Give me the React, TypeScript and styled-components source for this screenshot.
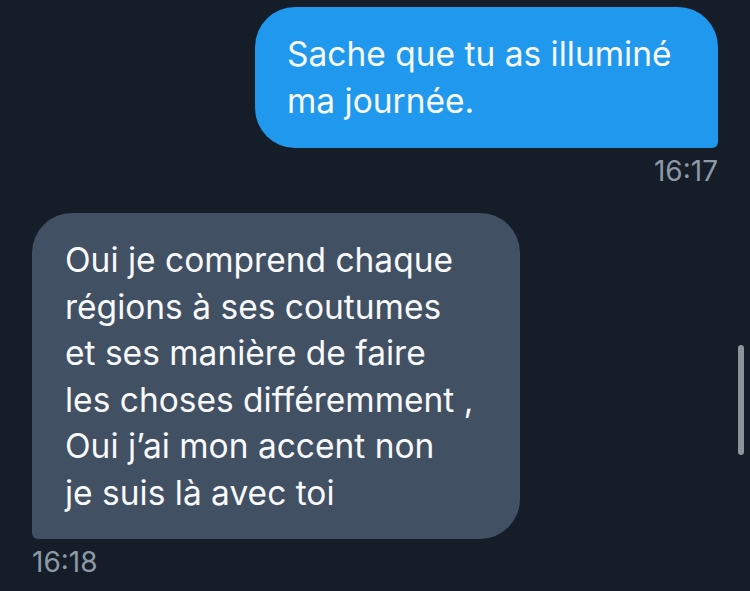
import React from 'react';
import styled, { createGlobalStyle } from 'styled-components';

type Message = {
  text: string;
  time: string;
  mine?: boolean;
  width: number;
};

const messages: Message[] = [
  {
    text: 'Sache que tu as illuminé\nma journée.',
    time: '16:17',
    mine: true,
    width: 463,
  },
  {
    text:
      'Oui je comprend chaque\nrégions à ses coutumes\net ses manière de faire\nles choses différemment ,\nOui j’ai mon accent non\nje suis là avec toi',
    time: '16:18',
    width: 488,
  },
];

const GlobalStyle = createGlobalStyle`
  html, body {
    margin: 0;
    padding: 0;
    background: #151d29;
  }
  body {
    font-family: Inter, "Liberation Sans", sans-serif;
    -webkit-font-smoothing: antialiased;
  }
`;

const Screen = styled.main`
  position: relative;
  width: 750px;
  height: 591px;
  overflow: hidden;
  background: #151d29;
  box-sizing: border-box;
  padding: 7px 32px 0 32px;
  display: flex;
  flex-direction: column;
  gap: 27px;
`;

const Row = styled.div<{ $mine?: boolean }>`
  display: flex;
  flex-direction: column;
  align-items: ${p => (p.$mine ? 'flex-end' : 'flex-start')};
`;

const Bubble = styled.div<{ $mine?: boolean; $width: number }>`
  width: ${p => p.$width}px;
  box-sizing: border-box;
  background: ${p => (p.$mine ? '#1f98ee' : '#425064')};
  color: #f7f9fa;
  font-size: 33.5px;
  line-height: ${p => (p.$mine ? '47px' : '46.6px')};
  white-space: pre-line;
  padding: ${p => (p.$mine ? '23.5px 16px 23.5px 32px' : '24px 16px 22.5px 33px')};
  border-radius: ${p => (p.$mine ? '40px 40px 6px 40px' : '40px 40px 40px 6px')};
`;

const Time = styled.span`
  margin-top: 8px;
  font-size: 28px;
  line-height: 30px;
  color: #8e99a6;
`;

const Scrollbar = styled.div`
  position: absolute;
  right: 6px;
  top: 345px;
  width: 6px;
  height: 110px;
  border-radius: 3px;
  background: #8d9399;
`;

export default function App() {
  return (
    <>
      <GlobalStyle />
      <Screen>
        {messages.map(m => (
          <Row key={m.time} $mine={m.mine}>
            <Bubble $mine={m.mine} $width={m.width}>
              {m.text}
            </Bubble>
            <Time>{m.time}</Time>
          </Row>
        ))}
        <Scrollbar />
      </Screen>
    </>
  );
}
